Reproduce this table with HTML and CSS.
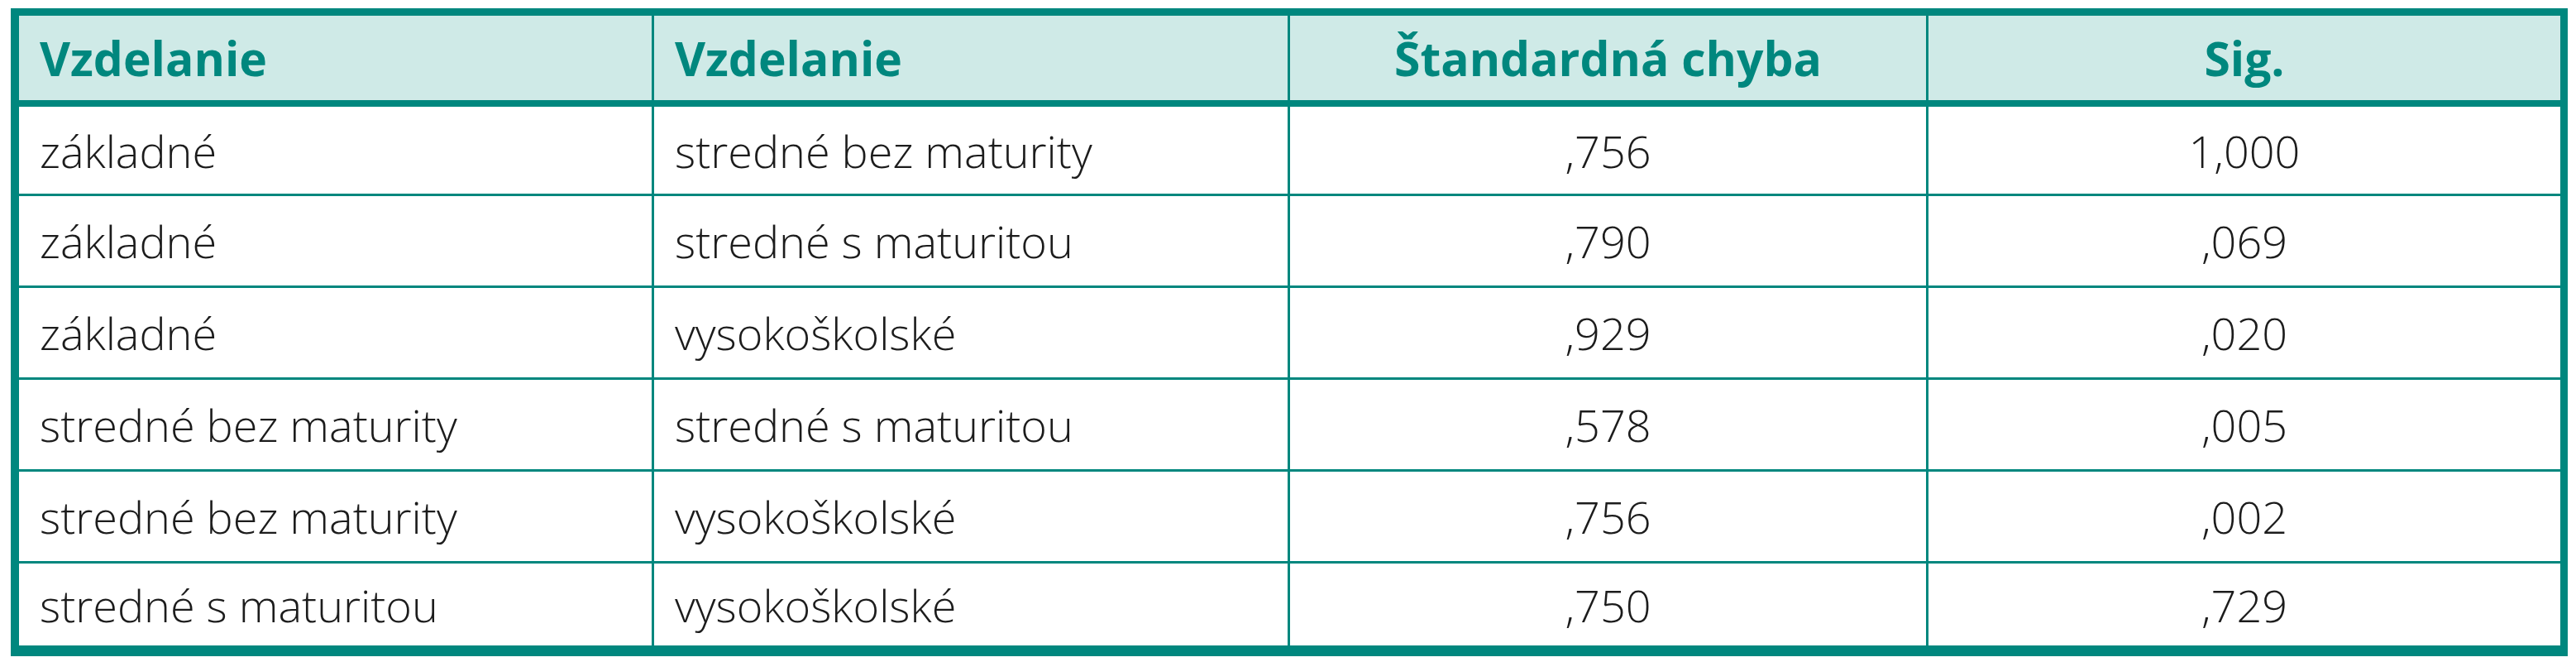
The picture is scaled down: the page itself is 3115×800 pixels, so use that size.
FILE: index.html
```html
<!DOCTYPE html>
<html lang="sk">
<head>
<meta charset="utf-8">
<title>Vzdelanie</title>
<link rel="stylesheet" href="styles.css">
</head>
<body>
<table class="grid">
  <colgroup>
    <col class="c1"><col class="c2"><col class="c3"><col class="c4">
  </colgroup>
  <thead>
    <tr class="head">
      <th class="left">Vzdelanie</th>
      <th class="left">Vzdelanie</th>
      <th class="mid">Štandardná chyba</th>
      <th class="mid">Sig.</th>
    </tr>
  </thead>
  <tbody>
    <tr class="r1"><td>základné</td><td>stredné bez maturity</td><td class="num">,756</td><td class="num">1,000</td></tr>
    <tr class="rn"><td>základné</td><td>stredné s maturitou</td><td class="num">,790</td><td class="num">,069</td></tr>
    <tr class="rn"><td>základné</td><td>vysokoškolské</td><td class="num">,929</td><td class="num">,020</td></tr>
    <tr class="rn"><td>stredné bez maturity</td><td>stredné s maturitou</td><td class="num">,578</td><td class="num">,005</td></tr>
    <tr class="rn"><td>stredné bez maturity</td><td>vysokoškolské</td><td class="num">,756</td><td class="num">,002</td></tr>
    <tr class="rl"><td>stredné s maturitou</td><td>vysokoškolské</td><td class="num">,750</td><td class="num">,729</td></tr>
  </tbody>
</table>
</body>
</html>
```
FILE: styles.css
```css
html, body {
  margin: 0;
  padding: 0;
  background: #ffffff;
}
body {
  padding: 10px 0 0 13px;
  font-family: "Open Sans", "Liberation Sans", sans-serif;
}
.grid {
  border-collapse: separate;
  border-spacing: 0;
  table-layout: fixed;
  width: 3092px;
  border-style: solid;
  border-color: #00877e;
  border-width: 9px 9px 13px 10px;
}
.c1 { width: 765px; }
.c2 { width: 769px; }
.c3 { width: 772px; }
.c4 { width: 767px; }

.grid th,
.grid td {
  padding: 0 0 0 25px;
  vertical-align: middle;
  white-space: nowrap;
  box-sizing: border-box;
}
.grid th + th,
.grid td + td {
  border-left: 3px solid #00877e;
}
.head th {
  height: 102px;
  background: #cfeae7;
  color: #00877e;
  font-weight: 700;
  font-size: 57px;
  line-height: 1;
  text-align: left;
}
.head th.mid {
  text-align: center;
  padding-left: 0;
}
.grid td {
  color: #1c1c1c;
  font-weight: 300;
  font-size: 54px;
  line-height: 1;
  text-align: left;
}
.grid td.num {
  text-align: center;
  padding-left: 0;
}
.r1 td {
  height: 113px;
  border-top: 8px solid #00877e;
}
.rn td {
  height: 111px;
  border-top: 3px solid #00877e;
}
.rl td {
  height: 102px;
  border-top: 3px solid #00877e;
}
```
